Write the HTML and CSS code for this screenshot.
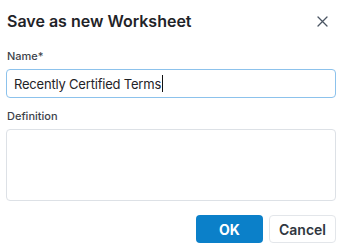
FILE: index.html
```html
<!DOCTYPE html>
<html lang="en">
<head>
    <meta charset="UTF-8">
    <title>Save as new Worksheet</title>
    <link rel="stylesheet" href="styles.css">
</head>
<body>
    <div class="dialog">
        <div class="dialog-header">
            <h1>Save as new Worksheet</h1>
            <button class="close" aria-label="Close">
                <svg width="11" height="11" viewBox="0 0 11 11">
                    <path d="M1 1 L10 10 M10 1 L1 10" stroke="#4b5563" stroke-width="1.3" stroke-linecap="round"/>
                </svg>
            </button>
        </div>

        <div class="field">
            <label>Name*</label>
            <div class="input focused">Recently Certified Terms<span class="caret"></span></div>
        </div>

        <div class="field">
            <label>Definition</label>
            <div class="input textarea"></div>
        </div>

        <div class="actions">
            <button class="btn btn-primary">OK</button>
            <button class="btn btn-secondary">Cancel</button>
        </div>
    </div>
</body>
</html>
```

FILE: styles.css
```css
* {
    margin: 0;
    padding: 0;
    box-sizing: border-box;
}

body {
    font-family: Inter, 'Noto Sans', sans-serif;
    background: white;
    color: #1f2328;
}

.dialog {
    padding: 11px 4px 0 6px;
    display: flex;
    flex-direction: column;
}

.dialog-header {
    display: flex;
    justify-content: space-between;
    align-items: center;
    margin-bottom: 18px;
}

.dialog-header h1 {
    font-size: 16px;
    line-height: 20px;
    font-weight: 600;
    padding-left: 1px;
}

.close {
    background: none;
    border: none;
    width: 20px;
    height: 20px;
    display: flex;
    align-items: center;
    justify-content: center;
    margin-right: 4px;
}

.field {
    display: flex;
    flex-direction: column;
}

.field label {
    font-size: 11px;
    line-height: 14px;
    font-weight: 500;
    color: #3d434b;
    padding-left: 1px;
    margin-bottom: 6px;
}

.input {
    height: 29px;
    border: 1px solid #dde1e6;
    border-radius: 4px;
    font-size: 13px;
    letter-spacing: -0.2px;
    padding: 0 7px;
    display: flex;
    align-items: center;
    margin-bottom: 11px;
}

.input.focused {
    border-color: #8cc2ec;
}

.caret {
    display: inline-block;
    width: 1px;
    height: 17px;
    background: #111;
    margin-left: 1px;
}

.textarea {
    height: 72px;
    margin-bottom: 14px;
}

.actions {
    display: flex;
    justify-content: flex-end;
    gap: 6px;
}

.btn {
    width: 67px;
    height: 28px;
    border-radius: 4px;
    font-family: Inter, 'Noto Sans', sans-serif;
    font-size: 14px;
    font-weight: 600;
}

.btn-primary {
    background: #0b80c9;
    color: white;
    border: none;
    font-weight: 700;
}

.btn-secondary {
    background: white;
    color: #2f3640;
    border: 1px solid #e3e6ea;
}
```
